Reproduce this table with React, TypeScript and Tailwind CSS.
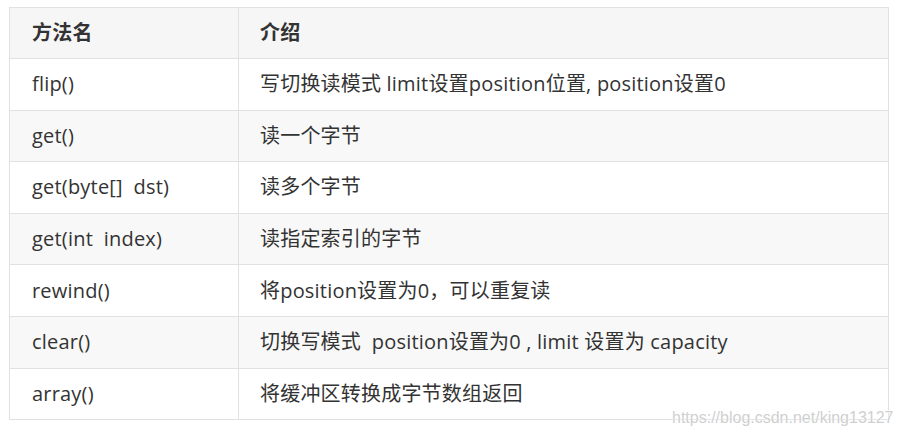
import React from "react";

const rows: [string, string][] = [
  ["flip()", "写切换读模式 limit设置position位置, position设置0"],
  ["get()", "读一个字节"],
  ["get(byte[]  dst)", "读多个字节"],
  ["get(int  index)", "读指定索引的字节"],
  ["rewind()", "将position设置为0，可以重复读"],
  ["clear()", "切换写模式  position设置为0 , limit 设置为 capacity"],
  ["array()", "将缓冲区转换成字节数组返回"],
];

export default function App() {
  return (
    <div
      className="relative w-[902px] h-[437px] bg-white pt-[7px] pl-[9px] text-[#333333]"
      style={{ fontFamily: '"Open Sans", "Noto Sans CJK SC", sans-serif' }}
    >
      <table className="border-collapse text-[20px] tracking-[0.2px] w-[880px]">
        <thead>
          <tr className="bg-[#f6f6f6] h-[51px]">
            <th className="border border-[#dfe2e5] w-[229px] text-left font-bold pl-[22px]">方法名</th>
            <th className="border border-[#dfe2e5] text-left font-bold pl-[21px]">介绍</th>
          </tr>
        </thead>
        <tbody>
          {rows.map(([name, desc], i) => (
            <tr key={name} className={i % 2 === 1 ? "bg-[#f8f8f8] h-[51.6px]" : "bg-white h-[51.6px]"}>
              <td className="border border-[#dfe2e5] pl-[22px] whitespace-pre">{name}</td>
              <td className="border border-[#dfe2e5] pl-[21px] whitespace-pre">{desc}</td>
            </tr>
          ))}
        </tbody>
      </table>
      <div
        className="absolute left-[672px] top-[406px] text-[16px] text-[#d0d0d0]"
        style={{ fontFamily: '"Liberation Sans", sans-serif', textShadow: "0 0 2px #fff, 0 0 2px #fff" }}
      >
        https://blog.csdn.net/king13127
      </div>
    </div>
  );
}
